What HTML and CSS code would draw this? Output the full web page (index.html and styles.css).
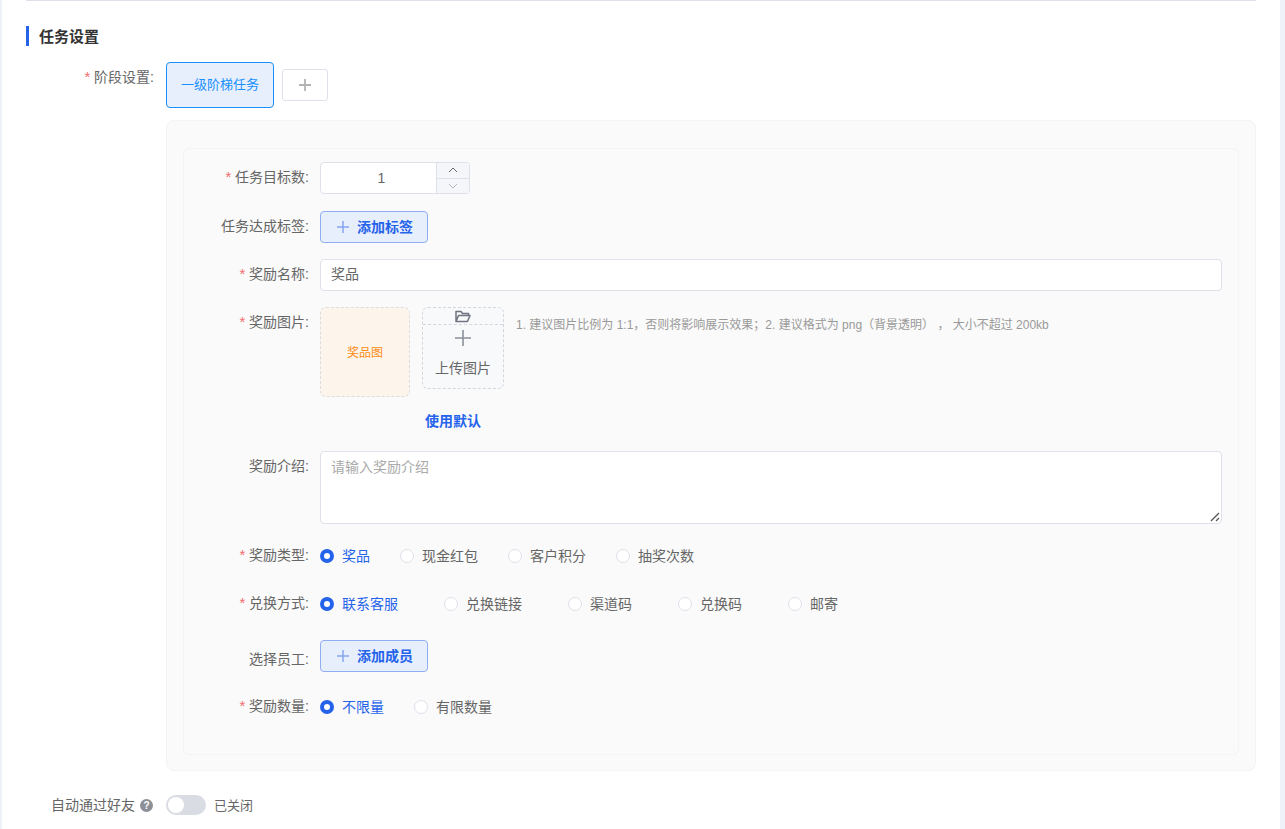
FILE: index.html
```html
<!DOCTYPE html>
<html lang="zh-CN">
  <head>
    <meta charset="UTF-8" />
    <title>任务设置</title>
    <link rel="stylesheet" href="styles.css">
  </head>
  <body>
    <div class="page">
      <div class="top-line"></div>
      <h2 class="section-title">任务设置</h2>

      <div class="stage-row">
        <label class="stage-label"><span class="req">*</span> 阶段设置:</label>
        <div class="stage-tab">一级阶梯任务</div>
        <button class="stage-add">
          <svg width="12" height="12" viewBox="0 0 12 12"><path d="M6 0v12M0 6h12" stroke="#b3b3b3" stroke-width="1.8" fill="none"/></svg>
        </button>
      </div>

      <div class="panel">
        <div class="inner">
          <div class="row row-number">
            <label class="label"><span class="req">*</span> 任务目标数:</label>
            <div class="number">
              <div class="number-value">1</div>
              <div class="stepper">
                <span class="step">
                  <svg width="10" height="6" viewBox="0 0 10 6"><path d="M1 5l4-4 4 4" stroke="#666" fill="none"/></svg>
                </span>
                <span class="step">
                  <svg width="10" height="6" viewBox="0 0 10 6"><path d="M1 1l4 4 4-4" stroke="#b5b5bd" fill="none"/></svg>
                </span>
              </div>
            </div>
          </div>

          <div class="row">
            <label class="label">任务达成标签:</label>
            <button class="add-btn">
              <svg width="12" height="12" viewBox="0 0 12 12"><path d="M6 0v12M0 6h12" stroke="#86a6f0" stroke-width="1.5" fill="none"/></svg>
              <span>添加标签</span>
            </button>
          </div>

          <div class="row">
            <label class="label"><span class="req">*</span> 奖励名称:</label>
            <div class="text-input">奖品</div>
          </div>

          <div class="row row-image">
            <label class="label"><span class="req">*</span> 奖励图片:</label>
            <div class="image-preview">奖品图</div>
            <div class="upload-col">
              <div class="upload">
                <div class="upload-head">
                  <svg width="16" height="13" viewBox="0 0 16 13"><path d="M1 11.5V1.5h5l1.5 2h6v2M1 11.5h11.5l2.5-6H3.5L1 11.5z" stroke="#6f7480" stroke-width="1.5" fill="none" stroke-linejoin="round"/></svg>
                </div>
                <svg class="upload-plus" width="16" height="16" viewBox="0 0 16 16"><path d="M8 0v16M0 8h16" stroke="#8a8f99" stroke-width="1.6" fill="none"/></svg>
                <div class="upload-text">上传图片</div>
              </div>
              <a class="use-default">使用默认</a>
            </div>
            <div class="hint">1. 建议图片比例为 1:1，否则将影响展示效果；2. 建议格式为 png（背景透明） ， 大小不超过 200kb</div>
          </div>

          <div class="row">
            <label class="label">奖励介绍:</label>
            <div class="textarea">
              请输入奖励介绍
              <svg class="resize" width="10" height="10" viewBox="0 0 10 10"><path d="M1 9l8-8M6 9l3-3" stroke="#555" stroke-width="1.3" fill="none"/></svg>
            </div>
          </div>

          <div class="row">
            <label class="label"><span class="req">*</span> 奖励类型:</label>
            <div class="radios">
              <span class="radio on"><i></i>奖品</span>
              <span class="radio"><i></i>现金红包</span>
              <span class="radio"><i></i>客户积分</span>
              <span class="radio"><i></i>抽奖次数</span>
            </div>
          </div>

          <div class="row row-wide">
            <label class="label"><span class="req">*</span> 兑换方式:</label>
            <div class="radios radios-wide">
              <span class="radio on"><i></i>联系客服</span>
              <span class="radio"><i></i>兑换链接</span>
              <span class="radio"><i></i>渠道码</span>
              <span class="radio"><i></i>兑换码</span>
              <span class="radio"><i></i>邮寄</span>
            </div>
          </div>

          <div class="row row-staff">
            <label class="label label-low">选择员工:</label>
            <button class="add-btn">
              <svg width="12" height="12" viewBox="0 0 12 12"><path d="M6 0v12M0 6h12" stroke="#86a6f0" stroke-width="1.5" fill="none"/></svg>
              <span>添加成员</span>
            </button>
          </div>

          <div class="row">
            <label class="label"><span class="req">*</span> 奖励数量:</label>
            <div class="radios">
              <span class="radio on"><i></i>不限量</span>
              <span class="radio"><i></i>有限数量</span>
            </div>
          </div>
        </div>
      </div>

      <div class="switch-row">
        <label class="switch-label">自动通过好友 <span class="help">?</span></label>
        <span class="switch"><b></b></span>
        <span class="switch-text">已关闭</span>
      </div>
    </div>
  </body>
</html>
```

FILE: styles.css
```css
* {
  box-sizing: border-box;
}

html,
body {
  margin: 0;
  height: 100%;
  overflow: hidden;
}

body {
  background: #f0f2f9;
  font-family: "Liberation Sans", "Noto Sans CJK SC", sans-serif;
  font-size: 14px;
  color: #666;
}

.page {
  margin: 0 5px 0 2px;
  padding: 0 24px;
  height: 829px;
  background: #fff;
}

.top-line {
  height: 1px;
  background: #dfe1ea;
}

.section-title {
  margin: 25px 0 16px;
  padding-left: 10px;
  height: 20px;
  border-left: 3px solid #2563eb;
  font-size: 15px;
  line-height: 21px;
  font-weight: bold;
  color: #333;
}

.req {
  color: #f56c6c;
  font-size: 15px;
}

/* stage row */
.stage-row {
  display: flex;
  align-items: flex-start;
}

.stage-label {
  width: 128px;
  margin-right: 12px;
  text-align: right;
  line-height: 30px;
}

.stage-tab {
  width: 108px;
  height: 46px;
  border: 1px solid #1890ff;
  border-radius: 4px;
  background: #e8effc;
  color: #1890ff;
  font-size: 13px;
  line-height: 44px;
  text-align: center;
}

.stage-add {
  display: flex;
  align-items: center;
  justify-content: center;
  width: 46px;
  height: 32px;
  margin: 7px 0 0 8px;
  padding: 0;
  border: 1px solid #dfe1ea;
  border-radius: 3px;
  background: #fff;
}

/* panels */
.panel {
  margin: 12px 0 0 140px;
  padding: 27px 16px 15px;
  height: 651px;
  border: 1px solid #f3f3f8;
  border-radius: 8px;
  background: #fafafa;
}

.inner {
  padding: 13px 16px 0 0;
  height: 607px;
  border: 1px solid #f3f3f8;
  border-radius: 6px;
}

.row {
  display: flex;
  align-items: flex-start;
  margin-bottom: 16px;
}

.row-number {
  margin-bottom: 17px;
}

.row-wide {
  margin-bottom: 20px;
}

.row-staff {
  margin-bottom: 19px;
}

.row-image {
  margin-bottom: 20px;
}

.label {
  flex: none;
  width: 125px;
  height: 32px;
  margin-right: 11px;
  text-align: right;
  line-height: 30px;
}

.label-low {
  padding-top: 4px;
}

/* number input */
.number {
  display: flex;
  width: 150px;
  height: 32px;
  border: 1px solid #dfe1ea;
  border-radius: 4px;
  background: #fff;
  overflow: hidden;
}

.number-value {
  flex: 1;
  padding-left: 6px;
  text-align: center;
  line-height: 30px;
}

.stepper {
  display: flex;
  flex-direction: column;
  width: 33px;
  border-left: 1px solid #dfe1ea;
  background: #f5f6fa;
}

.step {
  display: flex;
  flex: 1;
  align-items: center;
  justify-content: center;
}

.step + .step {
  border-top: 1px solid #dfe1ea;
}

/* add button */
.add-btn {
  display: flex;
  align-items: center;
  justify-content: center;
  gap: 8px;
  width: 108px;
  height: 32px;
  padding: 0 0 0 2px;
  border: 1px solid #8fadf0;
  border-radius: 4px;
  background: #e8effc;
  color: #2563eb;
  font-family: inherit;
  font-size: 14px;
  font-weight: bold;
}

.add-btn span {
  margin-bottom: 2px;
}

.text-input {
  flex: 1;
  height: 32px;
  padding-left: 10px;
  border: 1px solid #dfe1ea;
  border-radius: 4px;
  background: #fff;
  line-height: 28px;
}

/* image upload */
.image-preview {
  flex: none;
  width: 90px;
  height: 90px;
  margin-right: 12px;
  border: 1px dashed #dcdcdc;
  border-radius: 6px;
  background: #fdf5ec;
  color: #fa8c16;
  font-size: 12px;
  line-height: 90px;
  text-align: center;
}

.upload-col {
  flex: none;
  width: 82px;
  margin-right: 12px;
}

.upload {
  height: 82px;
  border: 1px dashed #d4d6dc;
  border-radius: 6px;
  background: #f8f9fb;
  text-align: center;
}

.upload-head {
  display: flex;
  align-items: center;
  justify-content: center;
  height: 17px;
  border-bottom: 1px dashed #d4d6dc;
}

.upload-plus {
  display: block;
  margin: 5px auto 0;
}

.upload-text {
  margin-top: 11px;
  line-height: 22px;
}

.use-default {
  display: block;
  margin: 22px 0 0 3px;
  color: #2563eb;
  font-weight: bold;
  line-height: 20px;
  white-space: nowrap;
}

.hint {
  font-size: 12px;
  line-height: 36px;
  color: #999;
}

.textarea {
  position: relative;
  flex: 1;
  height: 73px;
  padding: 5px 10px;
  border: 1px solid #dfe1ea;
  border-radius: 4px;
  background: #fff;
  color: #aaa;
  line-height: 20px;
}

.resize {
  position: absolute;
  right: 1px;
  bottom: 1px;
}

/* radios */
.radios {
  display: flex;
  gap: 30px;
  height: 32px;
  padding-bottom: 2px;
  align-items: center;
}

.radios-wide {
  gap: 46px;
}

.radio {
  display: flex;
  align-items: center;
  gap: 8px;
}

.radio i {
  width: 14px;
  height: 14px;
  margin-top: 2px;
  border: 1px solid #dfe1ea;
  border-radius: 50%;
  background: #fff;
}

.radio.on {
  color: #2563eb;
}

.radio.on i {
  border: 4.5px solid #2563eb;
}

/* bottom switch */
.switch-row {
  display: flex;
  align-items: center;
  height: 20px;
  margin-top: 24px;
}

.switch-label {
  display: flex;
  align-items: center;
  justify-content: flex-end;
  gap: 5px;
  width: 127px;
  margin-right: 13px;
  padding-bottom: 2px;
}

.help {
  width: 13px;
  height: 13px;
  margin-top: 2px;
  border-radius: 50%;
  background: #8c8f96;
  color: #fff;
  font-size: 10px;
  font-weight: bold;
  line-height: 13px;
  text-align: center;
}

.switch {
  display: block;
  width: 40px;
  height: 20px;
  padding: 2px;
  margin-right: 8px;
  border-radius: 10px;
  background: #d9dce3;
}

.switch b {
  display: block;
  width: 16px;
  height: 16px;
  border-radius: 50%;
  background: #fff;
}

.switch-text {
  padding-bottom: 2px;
  font-size: 13px;
}
```
